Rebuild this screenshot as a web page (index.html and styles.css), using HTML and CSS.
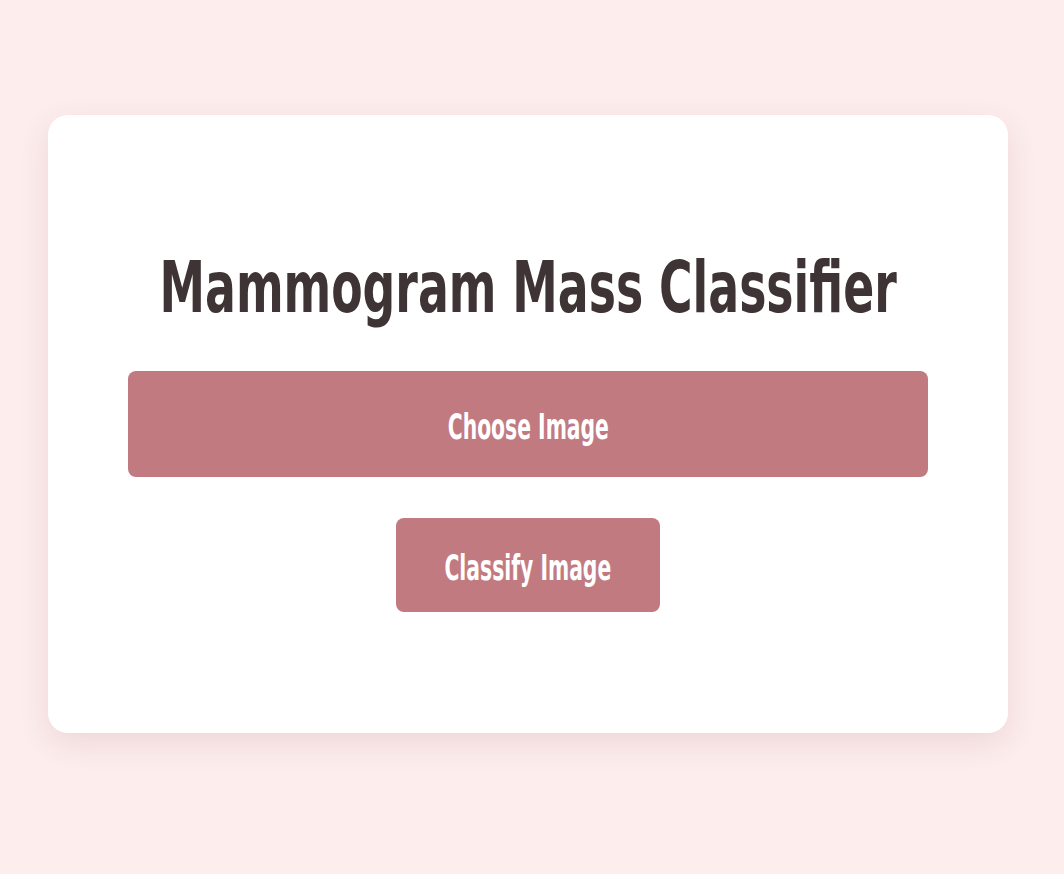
FILE: index.html
```html
<!DOCTYPE html>
<html lang="en">
<head>
<meta charset="utf-8">
<title>Mammogram Mass Classifier</title>
<link rel="stylesheet" href="styles.css">
</head>
<body>
<div class="page">
  <main class="card">
    <h1 class="title"><span class="squeeze">Mammogram Mass Classifier</span></h1>
    <label class="choose"><span class="squeeze">Choose Image</span></label>
    <button class="classify" type="button"><span class="squeeze">Classify Image</span></button>
  </main>
</div>
</body>
</html>
```

FILE: styles.css
```css
html, body {
  margin: 0;
  padding: 0;
}
body {
  background: #fdeded;
  min-height: 874px;
  font-family: "DejaVu Sans", sans-serif;
  font-stretch: condensed;
}
.page {
  padding: 115px 0 0 48px;
}
.card {
  box-sizing: border-box;
  width: 960px;
  height: 618px;
  background: #ffffff;
  border-radius: 20px;
  box-shadow: 0 10px 30px rgba(120, 60, 60, 0.12);
  padding: 120px 80px 0;
  display: flex;
  flex-direction: column;
  align-items: center;
}
.squeeze {
  display: inline-block;
  white-space: nowrap;
}
.title {
  margin: 0;
  height: 104px;
  line-height: 104px;
  font-size: 72px;
  font-weight: 700;
  color: #3f3435;
  text-align: center;
  white-space: nowrap;
  width: 100%;
  display: flex;
  justify-content: center;
}
.title .squeeze {
  transform: scaleX(0.706);
}
.choose {
  margin-top: 32px;
  width: 100%;
  height: 106px;
  box-sizing: border-box;
  padding-top: 4px;
  background: #c27a81;
  border-radius: 8px;
  color: #ffffff;
  font-size: 36px;
  font-weight: 700;
  display: flex;
  align-items: center;
  justify-content: center;
}
.choose .squeeze {
  transform: scaleX(0.628);
}
.classify {
  margin-top: 41px;
  width: 264px;
  height: 94px;
  box-sizing: border-box;
  padding: 4px 0 0;
  border: none;
  background: #c27a81;
  border-radius: 8px;
  color: #ffffff;
  font-family: inherit;
  font-stretch: condensed;
  font-size: 36px;
  font-weight: 700;
  display: flex;
  align-items: center;
  justify-content: center;
}
.classify .squeeze {
  transform: scaleX(0.628);
}
```
